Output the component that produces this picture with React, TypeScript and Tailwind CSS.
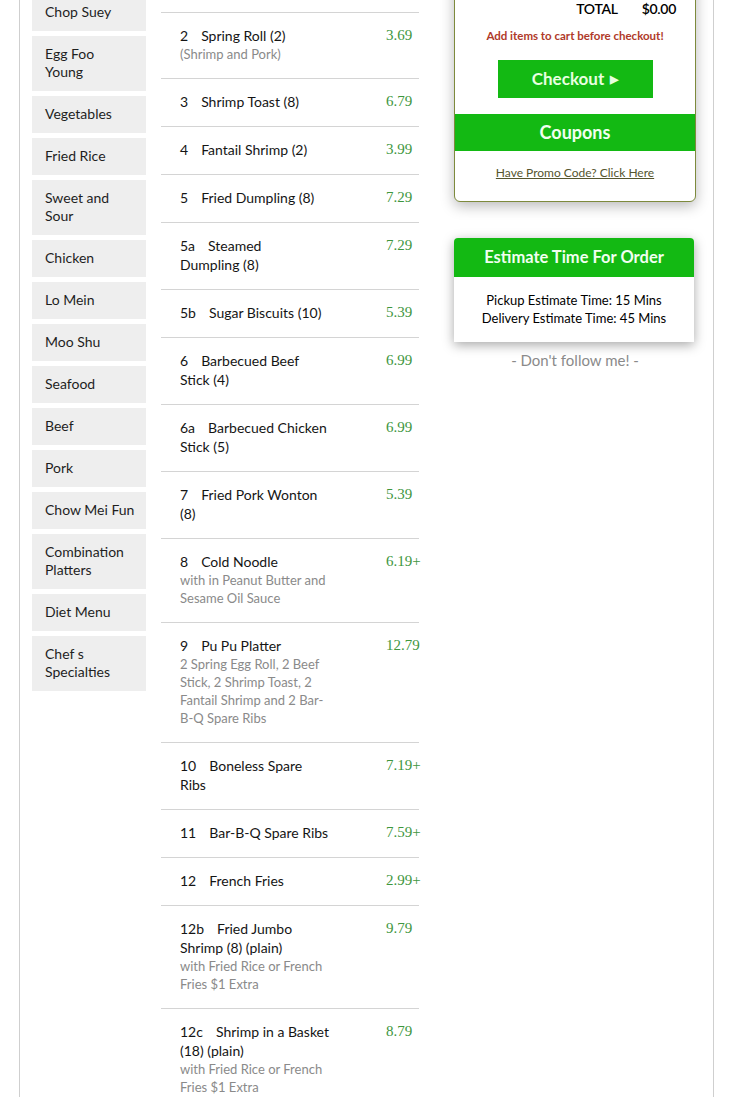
import React from "react";

const cats: string[][] = [
  ["Chop Suey"],
  ["Egg Foo", "Young"],
  ["Vegetables"],
  ["Fried Rice"],
  ["Sweet and", "Sour"],
  ["Chicken"],
  ["Lo Mein"],
  ["Moo Shu"],
  ["Seafood"],
  ["Beef"],
  ["Pork"],
  ["Chow Mei Fun"],
  ["Combination", "Platters"],
  ["Diet Menu"],
  ["Chef s", "Specialties"],
];

type Item = { num: string; name: string[]; price: string; desc?: string[] };

const items: Item[] = [
  { num: "2", name: ["Spring Roll (2)"], price: "3.69", desc: ["(Shrimp and Pork)"] },
  { num: "3", name: ["Shrimp Toast (8)"], price: "6.79" },
  { num: "4", name: ["Fantail Shrimp (2)"], price: "3.99" },
  { num: "5", name: ["Fried Dumpling (8)"], price: "7.29" },
  { num: "5a", name: ["Steamed", "Dumpling (8)"], price: "7.29" },
  { num: "5b", name: ["Sugar Biscuits (10)"], price: "5.39" },
  { num: "6", name: ["Barbecued Beef", "Stick (4)"], price: "6.99" },
  { num: "6a", name: ["Barbecued Chicken", "Stick (5)"], price: "6.99" },
  { num: "7", name: ["Fried Pork Wonton", "(8)"], price: "5.39" },
  {
    num: "8",
    name: ["Cold Noodle"],
    price: "6.19+",
    desc: ["with in Peanut Butter and", "Sesame Oil Sauce"],
  },
  {
    num: "9",
    name: ["Pu Pu Platter"],
    price: "12.79",
    desc: ["2 Spring Egg Roll, 2 Beef", "Stick, 2 Shrimp Toast, 2", "Fantail Shrimp and 2 Bar-", "B-Q Spare Ribs"],
  },
  { num: "10", name: ["Boneless Spare", "Ribs"], price: "7.19+" },
  { num: "11", name: ["Bar-B-Q Spare Ribs"], price: "7.59+" },
  { num: "12", name: ["French Fries"], price: "2.99+" },
  {
    num: "12b",
    name: ["Fried Jumbo", "Shrimp (8) (plain)"],
    price: "9.79",
    desc: ["with Fried Rice or French", "Fries $1 Extra"],
  },
  {
    num: "12c",
    name: ["Shrimp in a Basket", "(18) (plain)"],
    price: "8.79",
    desc: ["with Fried Rice or French", "Fries $1 Extra"],
  },
];

export default function App() {
  return (
    <div
      className="h-[1097px] overflow-hidden bg-white"
      style={{ fontFamily: "Lato, 'Open Sans', sans-serif" }}
    >
      <div className="ml-[19px] w-[695px] h-full border-x border-[#cfcfcf] flex pl-[12px]">
        {/* Sidebar */}
        <div className="w-[114px] shrink-0 -mt-[6px] flex flex-col gap-[5px]">
          {cats.map((c, i) => (
            <div
              key={i}
              className="bg-[#eeeeee] pl-[13px] pr-[6px] pt-[9px] pb-[10px] text-[14px] leading-[18px] text-[#1e1e1e]"
            >
              {c.map((l, j) => (
                <div key={j} className="whitespace-nowrap">
                  {l}
                </div>
              ))}
            </div>
          ))}
        </div>

        {/* Menu items */}
        <div className="w-[258px] shrink-0 ml-[15px] pt-[12px]">
          {items.map((it, i) => (
            <div
              key={i}
              className="border-t border-[#d4d4d4] flex pl-[19px] pt-[13px] pb-[15px]"
            >
              <div className="w-[206px] shrink-0">
                <div className="text-[14px] leading-[19px] text-[#151515]">
                  {it.name.map((l, j) => (
                    <div key={j} className="whitespace-nowrap">
                      {j === 0 && <span className="mr-[13px]">{it.num}</span>}
                      {l}
                    </div>
                  ))}
                </div>
                {it.desc && (
                  <div className="text-[13px] leading-[18px] text-[#8a8a8a]">
                    {it.desc.map((l, j) => (
                      <div key={j} className="whitespace-nowrap">
                        {l}
                      </div>
                    ))}
                  </div>
                )}
              </div>
              <div
                className="text-[15px] leading-[19px] text-[#3e963e] whitespace-nowrap"
                style={{ fontFamily: "'Liberation Serif', serif" }}
              >
                {it.price}
              </div>
            </div>
          ))}
        </div>

        {/* Right column */}
        <div className="w-[242px] shrink-0 ml-[35px]">
          <div className="-mt-[20px] bg-white border border-[#7d8a3c] rounded-b-[6px] shadow-[0_4px_14px_rgba(0,0,0,0.28)] flex flex-col items-center">
            <div className="self-stretch flex justify-end gap-[24px] pr-[19px] pt-[19px] text-[14px] leading-[18px] font-semibold text-black tracking-[-0.3px]">
              <span>TOTAL</span>
              <span>$0.00</span>
            </div>
            <div className="mt-[11px] text-[11.5px] leading-[14px] font-bold text-[#b03a2a]">
              Add items to cart before checkout!
            </div>
            <div className="mt-[17px] w-[155px] h-[38px] bg-[#13b913] flex items-center justify-center text-[17px] font-bold text-[#e8ffe0]">
              Checkout <span className="ml-[6px] text-[11px]">▶</span>
            </div>
            <div className="mt-[16px] self-stretch h-[37px] bg-[#13b913] flex items-center justify-center text-[18px] font-bold text-[#f0fff0]">
              Coupons
            </div>
            <div className="mt-[14px] mb-[20px] text-[12px] leading-[16px] text-[#55552e] underline">
              Have Promo Code? Click Here
            </div>
          </div>

          <div className="mt-[36px] w-[240px] rounded-t-[4px] bg-white shadow-[0_3px_12px_rgba(0,0,0,0.35)]">
            <div className="h-[39px] bg-[#13b913] rounded-t-[4px] flex items-center justify-center text-[16.5px] font-bold text-[#f0fff0]">
              Estimate Time For Order
            </div>
            <div className="pt-[14px] pb-[15px] text-center text-[13px] leading-[18px] text-black">
              <div>Pickup Estimate Time: 15 Mins</div>
              <div>Delivery Estimate Time: 45 Mins</div>
            </div>
          </div>

          <div className="mt-[8px] text-center text-[15px] leading-[20px] text-[#8a8a8a]">
            - Don't follow me! -
          </div>
        </div>
      </div>
    </div>
  );
}
